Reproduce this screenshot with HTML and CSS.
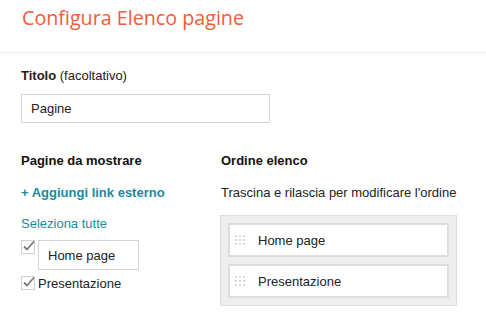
FILE: index.html
```html
<!doctype html>
<html>
<head>
<meta charset="utf-8">
<title>Configura Elenco pagine</title>
<link rel="stylesheet" href="styles.css">
</head>
<body>

<div class="header">
    <h1 class="pageTitle">Configura Elenco pagine</h1>
</div>

<div class="content">
    <div class="fieldLabel"><b>Titolo</b> (facoltativo)</div>
    <div class="textBox titleBox">Pagine</div>

    <div class="columns">
        <div class="leftCol">
            <div class="colTitle">Pagine da mostrare</div>
            <a class="addLink" href="#">+ Aggiungi link esterno</a>
            <a class="selectAll" href="#">Seleziona tutte</a>

            <div class="pageRow first">
                <svg class="check" width="14" height="14" viewBox="0 0 14 14">
                    <rect x="0.5" y="0.5" width="13" height="13" fill="#fff" stroke="#cfcfcf"/>
                    <path d="M3 6.5 L6 9.5 L13 1.5" fill="none" stroke="#7a7a7a" stroke-width="1.8"/>
                </svg>
                <div class="textBox pageBox">Home page</div>
            </div>
            <div class="pageRow">
                <svg class="check" width="14" height="14" viewBox="0 0 14 14">
                    <rect x="0.5" y="0.5" width="13" height="13" fill="#fff" stroke="#cfcfcf"/>
                    <path d="M3 6.5 L6 9.5 L13 1.5" fill="none" stroke="#7a7a7a" stroke-width="1.8"/>
                </svg>
                <span class="pageName">Presentazione</span>
            </div>
        </div>

        <div class="rightCol">
            <div class="colTitle">Ordine elenco</div>
            <div class="hint">Trascina e rilascia per modificare l'ordine</div>
            <ul class="orderList">
                <li><span class="handle"></span>Home page</li>
                <li><span class="handle"></span>Presentazione</li>
            </ul>
        </div>
    </div>
</div>

</body>
</html>
```

FILE: styles.css
```css
body{
    margin: 0;
    font-family: "Liberation Sans", Arial, sans-serif;
    font-size: 13px;
    color: #222;
    background: #fff;
}
.header{
    height: 52px;
    border-bottom: 1px solid #ebebeb;
}
.pageTitle{
    margin: 0;
    padding: 4px 0 0 22px;
    font-family: "Open Sans", sans-serif;
    font-weight: normal;
    font-size: 19.7px;
    line-height: 28px;
    color: #f65a36;
}
.content{
    padding: 0 21px;
}
.fieldLabel{
    margin-top: 15px;
    line-height: 16px;
}
.fieldLabel b{
    font-weight: bold;
}
.textBox{
    box-sizing: border-box;
    border: 1px solid #d4d4d4;
    padding-left: 9px;
    display: flex;
    align-items: center;
    color: #222;
}
.titleBox{
    margin-top: 10px;
    width: 249px;
    height: 29px;
}
.columns{
    display: flex;
    margin-top: 30px;
}
.leftCol{
    width: 200px;
    display: flex;
    flex-direction: column;
    align-items: flex-start;
}
.rightCol{
    flex: 1;
}
.colTitle{
    font-weight: bold;
    line-height: 16px;
    color: #111;
}
.addLink{
    margin-top: 16px;
    line-height: 16px;
    font-weight: bold;
    color: #1a8a9c;
    text-decoration: none;
}
.selectAll{
    margin-top: 15px;
    line-height: 16px;
    color: #1a8a9c;
    text-decoration: none;
}
.pageRow{
    display: flex;
    align-items: flex-start;
    margin-top: 6px;
}
.pageRow.first{
    margin-top: 8px;
}
.check{
    display: block;
    margin-right: 3px;
    flex: none;
}
.pageBox{
    width: 101px;
    height: 30px;
}
.pageName{
    line-height: 16px;
}
.hint{
    margin-top: 16px;
    line-height: 16px;
}
.orderList{
    list-style: none;
    margin: 14px 0 0 -1px;
    padding: 7px;
    width: 221px;
    background: #eeeeee;
    border: 1px solid #dddddd;
}
.orderList li{
    box-sizing: border-box;
    height: 34px;
    border: 2px solid #dddddd;
    background: #fff;
    display: flex;
    align-items: center;
    padding-left: 5px;
}
.orderList li + li{
    margin-top: 7px;
}
.handle{
    width: 10px;
    height: 10px;
    margin-right: 13px;
    background-image: radial-gradient(circle, #d8d8d8 1px, transparent 1.2px);
    background-size: 4px 4px;
    background-position: -1px -1px;
}
```
